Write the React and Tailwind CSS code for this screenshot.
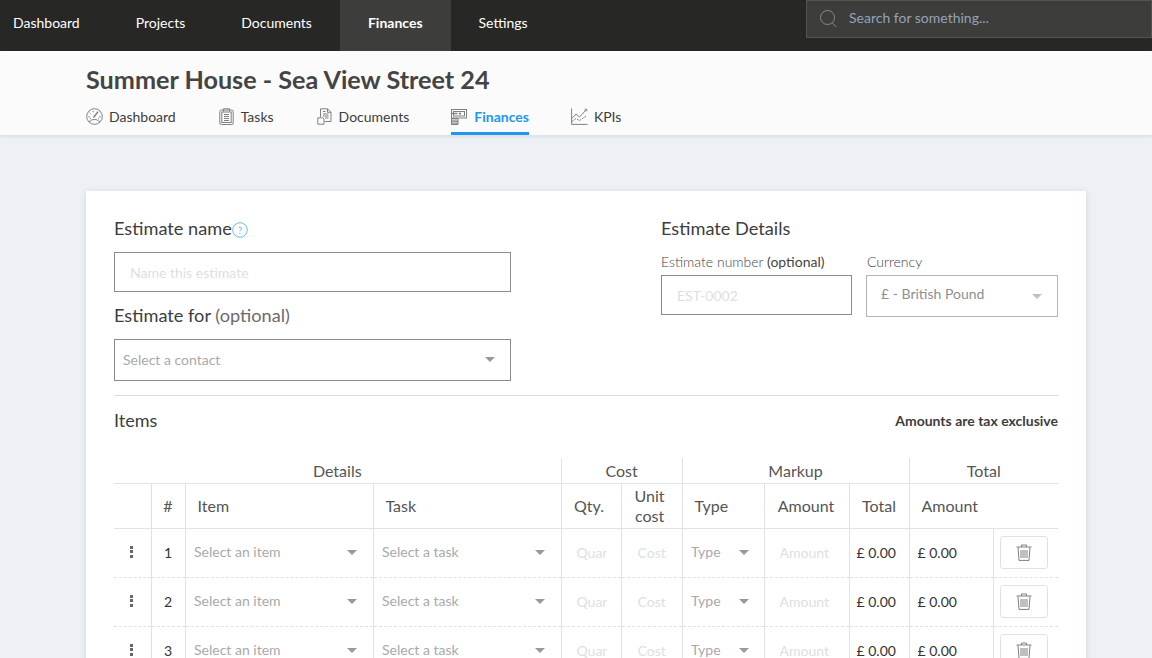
import React from 'react';

const navItems = [
  { label: 'Dashboard', cls: 'pl-[13px] pr-7' },
  { label: 'Projects', cls: 'px-7' },
  { label: 'Documents', cls: 'px-7' },
  { label: 'Finances', cls: 'px-7 bg-[#3d3d3b] font-bold', active: true },
  { label: 'Settings', cls: 'px-7' },
];

function GaugeIcon() {
  return (
    <svg width="17" height="17" viewBox="0 0 17 17" fill="none" stroke="#808080" strokeWidth="1">
      <circle cx="8.500" cy="8.500" r="7.800" />
      <path d="M3.200 14c1.300-1.700 3.200-2.500 5.300-2.500s4 .8 5.300 2.500" />
      <path d="M7.500 9.500 12 3.800" strokeWidth="1.400" />
      <path d="M7 2.800l.3 1.400M3.600 5l1.100.9M2.300 8.800h1.500M13.200 8.800h1.500M4 11l1-.6M13 11l-1-.6" />
    </svg>
  );
}

function ClipboardIcon() {
  return (
    <svg width="15" height="17" viewBox="0 0 15 17" fill="none" stroke="#808080" strokeWidth="1">
      <rect x=".8" y="2" width="13.400" height="14.500" rx="1.500" />
      <rect x="2.800" y="4" width="9.400" height="10.500" />
      <path d="M4.500 3.500V.8h6v2.700M5 6.500h5M5 8.500h5M5 10.500h5M5 12.500h5" />
    </svg>
  );
}

function DocsIcon() {
  return (
    <svg width="15" height="17" viewBox="0 0 15 17" fill="none" stroke="#808080" strokeWidth="1">
      <path d="M3.500 9V.8h7l3.500 3.500v9.200H7.500" />
      <path d="M10.500.8v3.500H14M6 3.500h2.500M6 6h5.500M6 8h5.500M8 10h3.500" />
      <path d="M.8 9.800h5l1.200 1.200v5.200H.8z" />
    </svg>
  );
}

function FinanceIcon() {
  return (
    <svg width="16" height="16" viewBox="0 0 16 16" fill="none" stroke="#808080" strokeWidth="1">
      <rect x=".5" y=".5" width="15" height="8.500" />
      <rect x="2.500" y="2.500" width="11" height="4.500" />
      <path d="M.5 4.500h6" strokeWidth="1.400" />
      <circle cx="9" cy="4.700" r="1.100" fill="#808080" stroke="none" />
      <path d="M.5 9.500h6.500V15.500H.5z" fill="#fbfbfb" />
      <path d="M.5 11.100h6.500M.5 12.700h6.500M.5 14.200h6.500" />
    </svg>
  );
}

function ChartIcon() {
  return (
    <svg width="17" height="17" viewBox="0 0 17 17" fill="none" stroke="#808080" strokeWidth="1">
      <path d="M.6.500v15.900h16" />
      <path d="M1 10.500 5 6l3.500 3L15 2" />
      <path d="M1 13.500 5 10.500l3.500 2L15 8" strokeDasharray="2 1" />
      <circle cx="15" cy="2" r="1" fill="#fbfbfb" />
    </svg>
  );
}

function TrashIcon() {
  return (
    <svg width="16" height="17" viewBox="0 0 16 17" fill="none" stroke="#808080" strokeWidth="1">
      <path d="M.5 3h15M5.500 3V1h5v2" />
      <path d="M2 3.500 3 16.400h10l1-12.900" />
      <path d="M5 6v8M7 6v8M9 6v8M11 6v8" />
    </svg>
  );
}

function Caret({ className }) {
  return (
    <svg width="10" height="5" viewBox="0 0 10 5" className={className}>
      <path d="M0 0h10L5 5z" fill="#999" />
    </svg>
  );
}

const tabs = [
  { label: 'Dashboard', Icon: GaugeIcon, gap: 'gap-[6px]', cls: 'mr-[43px]' },
  { label: 'Tasks', Icon: ClipboardIcon, gap: 'gap-[7px]', cls: 'mr-[43px]' },
  { label: 'Documents', Icon: DocsIcon, gap: 'gap-[7px]', cls: 'mr-[42px]' },
  { label: 'Finances', Icon: FinanceIcon, gap: 'gap-[7px]', cls: 'mr-[42px]', active: true },
  { label: 'KPIs', Icon: ChartIcon, gap: 'gap-[6px]', cls: '' },
];

function TableRow({ n }) {
  const td = 'border-r border-[#dfe3e8] p-0';
  const input = 'w-full bg-transparent outline-none text-[14px] placeholder:text-[#dcdfe3]';
  return (
    <tr className="h-[49px] border-b border-dashed border-[#dfe3e8]">
      <td className={td}>
        <div className="mb-[2px] flex flex-col items-center gap-[1.500px] pr-[2px]">
          <span className="h-[3px] w-[3px] bg-[#666]"></span>
          <span className="h-[3px] w-[3px] bg-[#666]"></span>
          <span className="h-[3px] w-[3px] bg-[#666]"></span>
        </div>
      </td>
      <td className={`${td} text-center text-[14px] text-[#333]`}>{n}</td>
      <td className={td}>
        <div className="flex items-center justify-between pl-[8.500px] pr-[16px] text-[14px] text-[#a9a9a9]">
          <span className="mb-[2px]">Select an item</span>
          <Caret />
        </div>
      </td>
      <td className={td}>
        <div className="flex items-center justify-between pl-[8.500px] pr-[16px] text-[14px] text-[#a9a9a9]">
          <span className="mb-[2px]">Select a task</span>
          <Caret />
        </div>
      </td>
      <td className={td}>
        <div className="mb-[2px] pl-[15px] pr-[14px]"><input className={input} placeholder="Quantity" /></div>
      </td>
      <td className={td}>
        <div className="mb-[2px] pl-4 pr-2"><input className={input} placeholder="Cost" /></div>
      </td>
      <td className={td}>
        <div className="flex items-center justify-between pl-[8.500px] pr-[15px] text-[14px] text-[#a9a9a9]">
          <span className="mb-[2px]">Type</span>
          <Caret />
        </div>
      </td>
      <td className={td}>
        <div className="mb-[2px] pl-[15px] pr-1"><input className={input} placeholder="Amount" /></div>
      </td>
      <td className={`${td} pl-[7px] text-[14px] text-[#333]`}>£ 0.00</td>
      <td className={`${td} pl-2 text-[14px] text-[#333]`}>£ 0.00</td>
      <td className="p-0">
        <button className="ml-[6px] flex h-[33px] w-[48px] items-center justify-center rounded-[3px] border border-[#dfe3e8] bg-white">
          <TrashIcon />
        </button>
      </td>
    </tr>
  );
}

export default function App() {
  return (
    <div className="h-screen overflow-hidden bg-[#edf1f5] [font-family:Lato,sans-serif]">
      <header className="flex h-[51px] justify-between bg-[#272726]">
        <nav className="flex">
          {navItems.map((item) => (
            <a key={item.label} className={`flex items-center pb-[7px] text-[14px] text-white ${item.cls}`}>
              {item.label}
            </a>
          ))}
        </nav>
        <div className="flex h-[38px] w-[346px] items-center border border-[#535351] bg-[#3d3d3b] pl-[13px]">
          <svg width="17" height="18" viewBox="0 0 17 18" fill="none" stroke="#8a8a8a" strokeWidth="1">
            <circle cx="7.500" cy="7.500" r="7" />
            <path d="m12.500 13 3.500 4" />
          </svg>
          <input
            className="mb-[3px] ml-[12px] flex-1 bg-transparent text-[14px] outline-none placeholder:text-[#94a3b8]"
            placeholder="Search for something..."
          />
        </div>
      </header>

      <div className="h-[85px] border-b border-[#dfe3e8] bg-[#fbfbfb] pl-[86px] pt-[12px] shadow-[0_1px_3px_rgba(0,0,0,0.08)]">
        <h1 className="text-[25.200px] font-bold leading-[32px] text-[#444]">Summer House - Sea View Street 24</h1>
        <div className="mt-[6px] flex h-[34px]">
          {tabs.map(({ label, Icon, gap, cls, active }) => (
            <a
              key={label}
              className={`flex items-center border-b-[3px] text-[14px] ${gap} ${cls} ${
                active ? 'border-[#2196f3] font-bold text-[#2196f3]' : 'border-transparent text-[#3d3d3d]'
              }`}
            >
              <Icon />
              {label}
            </a>
          ))}
        </div>
      </div>

      <main className="ml-[86px] mt-[55px] w-[1000px] bg-white px-[28px] pt-[26px] shadow-[0_1px_6px_rgba(0,0,0,0.12)]">
        <div className="flex h-[178px] justify-between">
          <div className="w-[397px]">
            <div className="flex h-[24px] items-center text-[18.200px] text-[#3d3d3d]">
              Estimate name
              <svg width="16" height="16" viewBox="0 0 16 16" className="mt-[2px]" fill="none">
                <circle cx="8" cy="8" r="7.300" stroke="#6db9f5" />
                <text x="8" y="11.500" textAnchor="middle" fontSize="10" fill="#6db9f5">?</text>
              </svg>
            </div>
            <input
              className="mt-[11px] block h-[40px] w-full border border-[#8c8c8c] pl-[15px] text-[14px] outline-none placeholder:text-[#dcdfe3]"
              placeholder="Name this estimate"
            />
            <div className="mt-[11px] h-[24px] text-[18.200px] leading-[24px] text-[#3d3d3d]">
              Estimate for <span className="text-[#6b6b6b]">(optional)</span>
            </div>
            <div className="mt-[12px] flex h-[42px] items-center justify-between border border-[#8c8c8c] pb-[2px] pl-2 pr-[15px] text-[14px] text-[#a9a9a9]">
              Select a contact
              <Caret />
            </div>
          </div>

          <div className="w-[397px]">
            <div className="h-[24px] text-[18.200px] leading-[23px] text-[#3d3d3d]">Estimate Details</div>
            <div className="mt-[11px] flex justify-between">
              <div className="w-[191px]">
                <div className="h-[20px] text-[14px] font-light leading-[20px] text-[#444]">
                  Estimate number <span className="font-normal">(optional)</span>
                </div>
                <input
                  className="mt-[3px] block h-[40px] w-full border border-[#8c8c8c] pl-[15px] text-[14px] outline-none placeholder:text-[#dcdfe3]"
                  placeholder="EST-0002"
                />
              </div>
              <div className="w-[192px]">
                <div className="h-[20px] pl-[1px] text-[14px] font-light leading-[20px] text-[#444]">Currency</div>
                <div className="mt-[3px] flex h-[42px] items-center justify-between border border-[#b5b5b5] pl-[14px] pr-[15px] text-[14px] text-[#8f8f8f]">
                  <span className="mb-[5px]">£ - British Pound</span>
                  <Caret className="opacity-60" />
                </div>
              </div>
            </div>
          </div>
        </div>

        <div className="flex h-[51px] items-center justify-between border-t border-[#dcdcdc] pb-[1px]">
          <h2 className="text-[18px] text-[#3d3d3d]">Items</h2>
          <span className="text-[14px] font-bold text-[#3d3d3d]">Amounts are tax exclusive</span>
        </div>

        <table className="mt-[12px] w-[944px] table-fixed border-collapse text-[#555]">
          <colgroup>
            <col className="w-[37px]" />
            <col className="w-[34px]" />
            <col className="w-[188px]" />
            <col className="w-[188px]" />
            <col className="w-[60px]" />
            <col className="w-[61px]" />
            <col className="w-[82px]" />
            <col className="w-[85px]" />
            <col className="w-[60px]" />
            <col className="w-[84px]" />
            <col className="w-[65px]" />
          </colgroup>
          <thead>
            <tr className="h-[25px] border-b border-[#dfe3e8] text-[16px] leading-[20px]">
              <th colSpan={4} className="border-r border-[#dfe3e8] pt-[1px] font-normal">Details</th>
              <th colSpan={2} className="border-r border-[#dfe3e8] pt-[1px] font-normal">Cost</th>
              <th colSpan={3} className="border-r border-[#dfe3e8] pt-[1px] font-normal">Markup</th>
              <th colSpan={2} className="pt-[1px] font-normal">Total</th>
            </tr>
            <tr className="h-[45px] border-b border-[#dfe3e8] text-[16px]">
              <th className="border-r border-[#dfe3e8]"></th>
              <th className="border-r border-[#dfe3e8] font-normal">#</th>
              <th className="border-r border-[#dfe3e8] pl-3 text-left font-normal">Item</th>
              <th className="border-r border-[#dfe3e8] pl-3 text-left font-normal">Task</th>
              <th className="border-r border-[#dfe3e8] pr-[4px] font-normal">Qty.</th>
              <th className="border-r border-[#dfe3e8] pr-[4px] font-normal leading-[20px]">Unit<br />cost</th>
              <th className="border-r border-[#dfe3e8] pl-3 text-left font-normal">Type</th>
              <th className="border-r border-[#dfe3e8] pr-[1px] font-normal">Amount</th>
              <th className="border-r border-[#dfe3e8] font-normal">Total</th>
              <th colSpan={2} className="pl-3 text-left font-normal">Amount</th>
            </tr>
          </thead>
          <tbody>
            <TableRow n={1} />
            <TableRow n={2} />
            <TableRow n={3} />
          </tbody>
        </table>
      </main>
    </div>
  );
}
